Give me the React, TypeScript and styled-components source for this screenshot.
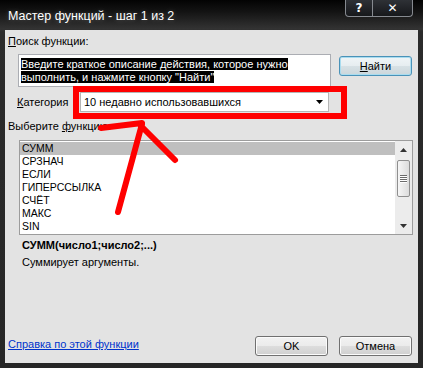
import React from "react";
import styled, { createGlobalStyle } from "styled-components";

const Global = createGlobalStyle`
  html, body { margin: 0; padding: 0; background: #1a1a1a; }
  body { width: 423px; height: 368px; overflow: hidden; }
  * { box-sizing: border-box; }
`;

const Window = styled.div`
  position: relative;
  width: 423px;
  height: 368px;
  display: flex;
  flex-direction: column;
  background: linear-gradient(180deg, #030303 0px, #141414 12px, #333 29px, #2b2b2b 32px, #262626 100%);
  font-family: "Liberation Sans", Arial, sans-serif;
  font-size: 11px;
  color: #000;
`;

const TitleBar = styled.div`
  height: 30px;
  display: flex;
  align-items: flex-start;
  justify-content: space-between;
  padding: 0 10px 0 8px;
`;

const Title = styled.div`
  color: #fff;
  font-size: 12.5px;
  line-height: 14px;
  margin-top: 9px;
  text-shadow: 0 0 5px rgba(255, 255, 255, 0.25);
`;

const CaptionButtons = styled.div`
  display: flex;
  height: 17px;
  border: 1px solid #868a90;
  border-top: none;
  border-radius: 0 0 4px 4px;
  overflow: hidden;
  background: linear-gradient(180deg, #2e3136, #16181b);
`;

const CapBtn = styled.div<{ $w: number }>`
  width: ${(p) => p.$w}px;
  display: flex;
  align-items: center;
  justify-content: center;
  color: #fff;
  font-weight: bold;
  font-size: 12px;
  font-family: "DejaVu Sans", sans-serif;
  & + & { border-left: 1px solid #868a90; }
`;

const Client = styled.div`
  flex: 1;
  margin: 0 5px 5px 5px;
  background: #e3e3e3;
  display: flex;
  flex-direction: column;
  padding: 0 6px 0 3px;
`;

const Label = styled.div<{ $mt: number; $ml?: number }>`
  margin-top: ${(p) => p.$mt}px;
  margin-left: ${(p) => p.$ml ?? 0}px;
  line-height: 13px;
  white-space: nowrap;
`;

const SearchRow = styled.div`
  display: flex;
  align-items: flex-start;
  margin-top: 6px;
  padding-left: 10px;
  gap: 8px;
`;

const TextBox = styled.div`
  width: 313px;
  height: 33px;
  background: #fff;
  border: 1px solid #abadb3;
  padding: 3px 2px;
  line-height: 12.5px;
`;

const Selected = styled.span`
  background: #000;
  color: #fff;
  -webkit-box-decoration-break: clone;
  box-decoration-break: clone;
`;

const Button = styled.div<{ $focus?: boolean; $mt?: number }>`
  width: 73px;
  height: 20px;
  margin-top: ${(p) => p.$mt ?? 0}px;
  display: flex;
  align-items: center;
  justify-content: center;
  border-radius: 3px;
  border: 1px solid ${(p) => (p.$focus ? "#4a92b8" : "#707070")};
  box-shadow: inset 0 0 0 1px ${(p) => (p.$focus ? "#a9dcef" : "#fbfbfb")};
  background: ${(p) =>
    p.$focus
      ? "linear-gradient(180deg, #f0f5f7 0%, #e6edf0 50%, #d7e1e5 51%, #cbd6db 100%)"
      : "linear-gradient(180deg, #f2f2f2 0%, #ebebeb 50%, #dddddd 51%, #cfcfcf 100%)"};
  color: #000;
`;

const CategoryRow = styled.div`
  display: flex;
  align-items: center;
  margin-top: 5px;
  padding-left: 9px;
`;

const CategoryLabel = styled.div`
  width: 63px;
  line-height: 13px;
`;

const Combo = styled.div`
  width: 249px;
  height: 20px;
  background: #fff;
  border: 1px solid #b5b5b5;
  display: flex;
  align-items: center;
  justify-content: space-between;
  padding: 0 5px 0 3px;
`;

const ListBox = styled.div`
  margin: 7px 0 0 11px;
  width: 394px;
  height: 95px;
  background: #fff;
  border: 1px solid #9c9c9c;
  display: flex;
`;

const Items = styled.div`
  flex: 1;
  padding-top: 1px;
`;

const Item = styled.div<{ $sel?: boolean }>`
  height: 13px;
  line-height: 13px;
  padding-left: 2px;
  font-size: 10.5px;
  background: ${(p) => (p.$sel ? "#bfbfbf" : "transparent")};
`;

const ScrollBar = styled.div`
  width: 17px;
  background: #ececec;
  display: flex;
  flex-direction: column;
  align-items: center;
`;

const ScrollArrow = styled.div`
  height: 17px;
  width: 17px;
  display: flex;
  align-items: center;
  justify-content: center;
`;

const ScrollTrack = styled.div`
  flex: 1;
  width: 100%;
  padding: 2px 2px 0 2px;
`;

const Thumb = styled.div`
  height: 37px;
  border: 1px solid #8f8f8f;
  border-radius: 2px;
  background: linear-gradient(90deg, #f6f6f6, #dcdcdc);
  display: flex;
  flex-direction: column;
  align-items: center;
  justify-content: center;
  gap: 1px;
`;

const Grip = styled.div`
  width: 7px;
  height: 1px;
  background: #6a6a6a;
  box-shadow: 0 1px 0 #fff;
`;

const Signature = styled.div`
  margin: 4px 0 0 14px;
  font-weight: bold;
  line-height: 13px;
`;

const Description = styled.div`
  margin: 4px 0 0 14px;
  line-height: 13px;
`;

const Spacer = styled.div`
  flex: 1;
`;

const BottomRow = styled.div`
  display: flex;
  align-items: center;
  gap: 11px;
  margin-bottom: 7px;
`;

const HelpLink = styled.a`
  color: #0033cc;
  text-decoration: underline;
  margin-right: auto;
  margin-bottom: 3px;
  line-height: 13px;
`;

const Overlay = styled.svg`
  position: absolute;
  left: 0;
  top: 0;
  pointer-events: none;
`;

const items = ["СУММ", "СРЗНАЧ", "ЕСЛИ", "ГИПЕРССЫЛКА", "СЧЁТ", "МАКС", "SIN"];

export default function App() {
  return (
    <>
      <Global />
      <Window>
        <TitleBar>
          <Title>Мастер функций - шаг 1 из 2</Title>
          <CaptionButtons>
            <CapBtn $w={26}>?</CapBtn>
            <CapBtn $w={40}>✕</CapBtn>
          </CaptionButtons>
        </TitleBar>
        <Client>
          <Label $mt={5}>
            <u>П</u>оиск функции:
          </Label>
          <SearchRow>
            <TextBox>
              <Selected>
                Введите краткое описание действия, которое нужно
                <br />
                выполнить, и нажмите кнопку "Найти"
              </Selected>
            </TextBox>
            <Button $focus $mt={2}>
              <span>
                <u>Н</u>айти
              </span>
            </Button>
          </SearchRow>
          <CategoryRow>
            <CategoryLabel>
              <u>К</u>атегория
            </CategoryLabel>
            <Combo>
              <span>10 недавно использовавшихся</span>
              <svg width="7" height="4" viewBox="0 0 7 4">
                <path d="M0 0H7L3.5 4Z" fill="#000" />
              </svg>
            </Combo>
          </CategoryRow>
          <Label $mt={8}>
            Выберите <u>ф</u>ункцию:
          </Label>
          <ListBox>
            <Items>
              {items.map((t, i) => (
                <Item key={t} $sel={i === 0}>
                  {t}
                </Item>
              ))}
            </Items>
            <ScrollBar>
              <ScrollArrow>
                <svg width="7" height="4" viewBox="0 0 7 4">
                  <path d="M0 4H7L3.5 0Z" fill="#333" />
                </svg>
              </ScrollArrow>
              <ScrollTrack>
                <Thumb>
                  <Grip />
                  <Grip />
                  <Grip />
                  <Grip />
                </Thumb>
              </ScrollTrack>
              <ScrollArrow>
                <svg width="7" height="4" viewBox="0 0 7 4">
                  <path d="M0 0H7L3.5 4Z" fill="#333" />
                </svg>
              </ScrollArrow>
            </ScrollBar>
          </ListBox>
          <Signature>СУММ(число1;число2;...)</Signature>
          <Description>Суммирует аргументы.</Description>
          <Spacer />
          <BottomRow>
            <HelpLink href="#">Справка по этой функции</HelpLink>
            <Button>OK</Button>
            <Button>Отмена</Button>
          </BottomRow>
        </Client>
        <Overlay width="423" height="368" viewBox="0 0 423 368">
          <rect x="76" y="89" width="268" height="27" fill="none" stroke="#ff0000" strokeWidth="6" />
          <g stroke="#ff0000" strokeWidth="6" strokeLinecap="round" fill="none">
            <path d="M101 128L142 123" />
            <path d="M142 124L118 212" />
            <path d="M141 126L175 160" />
          </g>
        </Overlay>
      </Window>
    </>
  );
}
